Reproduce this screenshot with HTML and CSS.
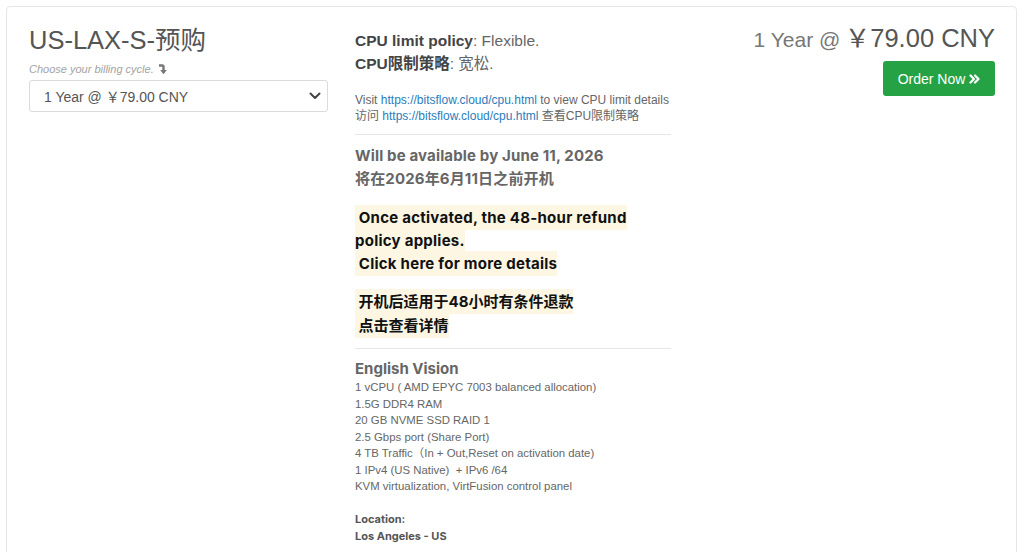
FILE: index.html
```html
<!DOCTYPE html>
<html>
<head>
<meta charset="utf-8">
<link rel="stylesheet" href="styles.css">
</head>
<body>
<div class="card">
  <div class="col-left">
    <h1 class="title">US-LAX-S-预购</h1>
    <div class="hint">Choose your billing cycle.
      <svg class="hint-icon" width="10" height="11" viewBox="0 0 10 11"><path d="M1 1.5h3.2a1.3 1.3 0 0 1 1.3 1.3v4.2" fill="none" stroke="#777" stroke-width="2.4" stroke-linejoin="round"/><path d="M2.2 6h6.6L5.5 10.2z" fill="#777"/></svg>
    </div>
    <div class="select">
      <span>1 Year @ ￥79.00 CNY</span>
      <svg width="12" height="8" viewBox="0 0 12 8"><path d="M1.5 1.5L6 6l4.5-4.5" fill="none" stroke="#444" stroke-width="2" stroke-linecap="round" stroke-linejoin="round"/></svg>
    </div>
  </div>
  <div class="col-mid">
    <p class="policy"><b>CPU limit policy</b>: Flexible.<br><b>CPU限制策略</b>: 宽松.</p>
    <p class="visit">Visit <a href="#">https://bitsflow.cloud/cpu.html</a> to view CPU limit details<br>访问 <a href="#">https://bitsflow.cloud/cpu.html</a> 查看CPU限制策略</p>
    <hr class="rule">
    <p class="avail">Will be available by June 11, 2026<br>将在2026年6月11日之前开机</p>
    <p class="notice"><span class="mark">&nbsp;Once activated, the 48-hour refund policy applies.<br>&nbsp;Click here for more details</span></p>
    <p class="notice cjk"><span class="mark">&nbsp;开机后适用于48小时有条件退款<br>&nbsp;点击查看详情</span></p>
    <hr class="rule">
    <h3 class="spec-title">English Vision</h3>
    <ul class="specs">
      <li>1 vCPU ( AMD EPYC 7003 balanced allocation)</li>
      <li>1.5G DDR4 RAM</li>
      <li>20 GB NVME SSD RAID 1</li>
      <li>2.5 Gbps port (Share Port)</li>
      <li>4 TB Traffic（In + Out,Reset on activation date)</li>
      <li>1 IPv4 (US Native)&nbsp; + IPv6 /64</li>
      <li>KVM virtualization, VirtFusion control panel</li>
      <li class="blank">&nbsp;</li>
      <li class="strong">Location:</li>
      <li class="strong">Los Angeles - US</li>
    </ul>
  </div>
  <div class="col-right">
    <div class="price"><span class="cycle">1 Year @</span> <span class="amount">￥79.00 CNY</span></div>
    <a class="order" href="#">Order Now
      <svg width="11" height="10" viewBox="0 0 11 10"><path d="M1.5 1.5L5 5 1.5 8.5M6 1.5L9.5 5 6 8.5" fill="none" stroke="#fff" stroke-width="2.2" stroke-linecap="round" stroke-linejoin="round"/></svg>
    </a>
  </div>
</div>
</body>
</html>
```

FILE: styles.css
```css
* { box-sizing: border-box; }
html, body { margin: 0; padding: 0; background: #fff; }
body {
  font-family: "Liberation Sans", "Noto Sans CJK SC", sans-serif;
  color: #666;
  overflow: hidden;
  height: 552px;
}
.card {
  margin: 6px 7px 0 6px;
  border: 1px solid #e6e6e6;
  border-radius: 4px;
  height: 600px;
  display: flex;
  padding: 16px 21px 0 22px;
}
.col-left { width: 299px; margin-right: 27px; flex: none; }
.col-mid { width: 316px; flex: none; padding-top: 6px; }
.col-right { flex: 1; display: flex; flex-direction: column; align-items: flex-end; }

.title {
  margin: 0;
  font-size: 25.5px;
  line-height: 34px;
  font-weight: 400;
  color: #555;
}
.hint {
  margin-top: 4px;
  font-size: 11px;
  line-height: 16px;
  font-style: italic;
  color: #a3a3a3;
  display: flex;
  align-items: center;
  gap: 4px;
}
.hint-icon { margin-top: 1px; }
.select {
  margin-top: 3px;
  height: 32px;
  border: 1px solid #dcdcdc;
  border-radius: 3px;
  display: flex;
  align-items: center;
  justify-content: space-between;
  padding: 0 6px 0 14px;
  font-size: 14px;
  color: #555;
}

.policy { margin: 0; font-size: 15.5px; line-height: 23px; color: #666; }
.policy b { color: #444; }
.visit { margin: 17px 0 0; font-size: 12px; line-height: 16px; color: #666; }
.visit a { color: #2a7dbb; text-decoration: none; }
.rule { margin: 10px 0 0; border: 0; border-top: 1px solid #e6e6e6; height: 0; }
.avail, .notice, .spec-title, .specs .strong { font-family: Inter, "Noto Sans CJK SC", sans-serif; }
.avail { margin: 9px 0 0; font-size: 15px; line-height: 23px; font-weight: 700; color: #666; letter-spacing: 0.15px; }
.notice { margin: 16px 0 0; font-size: 15px; line-height: 23px; font-weight: 700; color: #111; letter-spacing: 0.25px; }
.notice.cjk { margin-top: 15px; line-height: 24px; letter-spacing: 0; }
.mark { background: #fcf6e3; padding: 3px 0; }
.spec-title { margin: 10px 0 0; font-size: 15px; line-height: 20px; font-weight: 700; color: #666; }
.specs { list-style: none; margin: 0; padding: 0; font-size: 11.4px; line-height: 16.5px; color: #666; }
.specs .strong { font-weight: 700; color: #555; font-size: 11px; }

.price { margin-top: 0; line-height: 30px; color: #666; white-space: nowrap; }
.cycle { font-size: 21px; color: #777; }
.amount { font-size: 25.5px; color: #555; }
.order {
  margin-top: 4px;
  height: 35px;
  width: 112px;
  background: #25a244;
  border-radius: 3px;
  color: #fff;
  text-decoration: none;
  font-size: 14px;
  display: flex;
  align-items: center;
  justify-content: center;
  gap: 4px;
}
```
